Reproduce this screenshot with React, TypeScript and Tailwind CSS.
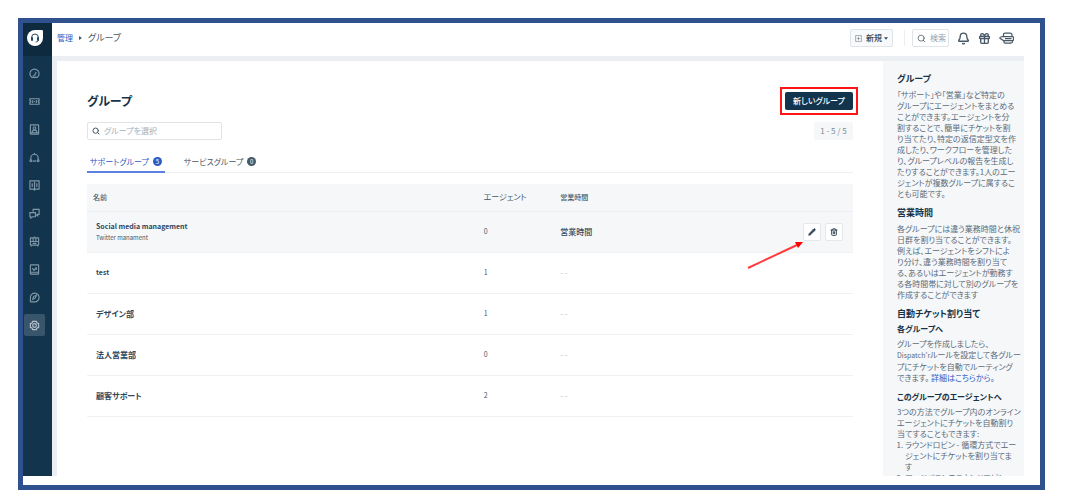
import { ReactNode } from "react";
import { Bell, Gift, Pencil, Search, Trash2 } from "lucide-react";

const navItems: { label: string; icon: ReactNode }[] = [
  {
    label: "ダッシュボード",
    icon: (
      <>
        <path d="M6 20.5a10 10 0 1 1 12 0z" />
        <path d="M12 15l4-6M8 17h6" />
      </>
    ),
  },
  {
    label: "チケット",
    icon: (
      <>
        <path d="M2 6h20v4a2 2 0 0 0 0 4v4H2v-4a2 2 0 0 0 0-4z" />
        <path d="M8 9v6M16 9v6M11 12h2" />
      </>
    ),
  },
  {
    label: "連絡先",
    icon: (
      <>
        <rect x="3" y="2" width="18" height="20" rx="1" />
        <circle cx="12" cy="9" r="3" />
        <path d="M7 18c0-6 10-6 10 0M3 19h18" />
      </>
    ),
  },
  {
    label: "ソーシャル",
    icon: (
      <>
        <path d="M4 17v-4a8 8 0 0 1 16 0v4M8 20h8" />
        <path d="M12 2v3" />
        <circle cx="4" cy="19" r="2" />
        <circle cx="20" cy="19" r="2" />
      </>
    ),
  },
  {
    label: "ソリューション",
    icon: (
      <>
        <path d="M2 2h20v18h-8l-2 2-2-2H2z" />
        <path d="M12 3v17M7 7v8M17 7v8" />
      </>
    ),
  },
  {
    label: "フォーラム",
    icon: (
      <>
        <path d="M9 8V3h13v11h-3v3l-4-3" />
        <path d="M2 10h12v9H8l-4 3v-3H2z" />
      </>
    ),
  },
  {
    label: "ボット",
    icon: (
      <>
        <rect x="3" y="4" width="18" height="16" rx="1" />
        <path d="M3 12h18M9 5v6M15 5v6M8 16h8M12 1v3M5 20v3M19 20v3" />
      </>
    ),
  },
  {
    label: "レポート",
    icon: (
      <>
        <rect x="3" y="2" width="18" height="20" rx="1" />
        <path d="M7 9l4 5 5-7M3 18h18M16 7v6" />
      </>
    ),
  },
  {
    label: "はじめに",
    icon: (
      <>
        <path d="M3 22v-10a9.500 9.500 0 1 1 9 9.500H3" />
        <path d="M8 16l2-6 6-3-2 6z" />
      </>
    ),
  },
  {
    label: "管理",
    icon: (
      <>
        <path d="M8 3h8l1 3 4 2v8l-4 2-1 3H8l-1-3-4-2V8l4-2z" />
        <circle cx="12" cy="12" r="4" />
      </>
    ),
  },
];

const groups = [
  { name: "test", agents: 1 },
  { name: "デザイン部", agents: 1 },
  { name: "法人営業部", agents: 0 },
  { name: "顧客サポート", agents: 2 },
];

function Lines({ items }: { items: string[] }) {
  return (
    <>
      {items.map((line) => (
        <span key={line} className="block whitespace-nowrap">
          {line}
        </span>
      ))}
    </>
  );
}

function Sidebar() {
  return (
    <nav className="w-[29px] shrink-0 bg-[#12344d]">
      <div className="flex h-[33px] items-center bg-[#0d2a3e] pb-[3px] pl-1">
        <svg viewBox="0 0 24 24" className="size-4">
          <path d="M12 0h10a2 2 0 0 1 2 2v10A12 12 0 1 1 12 0z" fill="#fff" />
          <path d="M7 14v-3a5 5 0 0 1 10 0v3M17 15c0 2-2 3-4 3" fill="none" stroke="#264966" strokeWidth="1.500" />
          <path d="M6 11h3v5H6zM15 11h3v5h-3z" fill="#264966" />
        </svg>
      </div>
      <ul className="mt-1.5 ml-px flex flex-col gap-1.5">
        {navItems.map((item) => (
          <li key={item.label}>
            <a
              href="#"
              aria-label={item.label}
              className={
                item.label === "管理"
                  ? "flex h-[22px] w-[21px] items-center justify-center rounded-xs bg-[#38556b] text-[#b4c2cd]"
                  : "flex h-[22px] w-[21px] items-center justify-center text-[#7f97a8]"
              }
            >
              <svg viewBox="0 0 24 24" fill="none" stroke="currentColor" strokeWidth="2.500" className="size-[11px]">
                {item.icon}
              </svg>
            </a>
          </li>
        ))}
      </ul>
    </nav>
  );
}

function TopBar() {
  return (
    <header className="flex h-[33px] shrink-0 items-center bg-white pr-2.5 pb-[3px] pl-[5px] text-[#475867]">
      <a href="#" className="text-[8px] text-[#2c5cc5]">管理</a>
      <svg viewBox="0 0 6 8" className="mx-1.5 h-1 w-[3px]">
        <path d="M0 0l6 4-6 4z" fill="#475867" />
      </svg>
      <span className="text-[9px]">グループ</span>

      <button className="ml-auto flex h-[18px] w-[43px] items-center justify-center gap-1 rounded-xs border border-[#dfe4e9] bg-[#f7f9fa] text-[8px] font-medium text-[#33475b]">
        <svg viewBox="0 0 12 12" fill="none" stroke="#6f7c87" className="size-[7px]">
          <path d="M1 1h10v10H1zM6 3v6M3 6h6" />
        </svg>
        <span className="flex items-center gap-0.5">
          新規
          <svg viewBox="0 0 8 5" className="h-[3px] w-1">
            <path d="M0 0h8L4 5z" fill="#33475b" />
          </svg>
        </span>
      </button>
      <div className="ml-[11px] h-4 w-px bg-[#ebeff3]" />
      <label className="ml-[7px] flex h-[18px] w-[37px] items-center gap-1 rounded-xs border border-[#dfe4e9] pl-1">
        <Search size={9} className="shrink-0 text-[#475867]" />
        <input aria-label="検索" placeholder="検索" className="w-full min-w-0 text-[8px] outline-none placeholder:text-[#92a2b1]" />
      </label>
      <button aria-label="通知" className="ml-2">
        <Bell size={13} strokeWidth={2.5} />
      </button>
      <button aria-label="新着情報" className="ml-2">
        <Gift size={13} strokeWidth={2.5} />
      </button>
      <button aria-label="Freddy" className="ml-2">
        <svg viewBox="0 0 30 24" fill="none" stroke="currentColor" strokeWidth="2.500" className="h-3 w-[15px]">
          <path d="M9 9V5q0-3 3-3h10q4 0 4 4v3M1 11l6-2h20q2 0 2 3v3q0 2-2 2H9L1 12M10 17v3q0 2 2 2h12q3 0 3-3v-2M12 13h13" />
        </svg>
      </button>
    </header>
  );
}

function GroupTable() {
  return (
    <table className="mt-[11px] w-full table-fixed text-left text-[8px] text-[#475867]">
      <thead>
        <tr className="h-[27px] border-b border-[#ebeff3] bg-[#f5f7f9]">
          <th className="w-[51%] px-1.5 text-[7px] font-medium">名前</th>
          <th className="w-[10%] px-1.5 font-normal">エージェント</th>
          <th className="w-[14%] px-1.5 text-[7px] font-medium">営業時間</th>
          <th aria-label="操作" />
        </tr>
      </thead>
      <tbody>
        <tr className="h-[41px] border-b border-[#f0f3f5] bg-[#f5f7f9]">
          <td className="px-[9px] leading-[11px]">
            <p className="text-[7px] font-bold text-[#33475b]">Social media management</p>
            <p className="text-[6px]">Twitter manament</p>
          </td>
          <td className="px-1.5 text-[7px]">0</td>
          <td className="px-1.5 font-medium text-[#33475b]">営業時間</td>
          <td className="pr-2.5">
            <div className="relative flex justify-end gap-1">
              <button aria-label="編集" className="flex size-[18px] items-center justify-center rounded-xs border border-[#e3e8ec] bg-white text-[#33475b]">
                <Pencil size={8} fill="currentColor" />
              </button>
              <button aria-label="削除" className="flex size-[18px] items-center justify-center rounded-xs border border-[#e3e8ec] bg-white text-[#33475b]">
                <Trash2 size={8} strokeWidth={3} />
              </button>
              <svg viewBox="0 0 56 28" className="absolute top-[18px] right-10 h-7 w-14">
                <path d="M1 27L50 4" stroke="#ff3b3b" strokeWidth="2" />
                <path d="M56 1L48 1l3 6z" fill="#ff0000" />
              </svg>
            </div>
          </td>
        </tr>
        {groups.map((group) => (
          <tr key={group.name} className="h-[41px] border-b border-[#f0f3f5]">
            <td className={group.name === "test" ? "px-[9px] text-[7px] font-bold text-[#33475b]" : "px-[9px] font-bold text-[#33475b]"}>
              {group.name}
            </td>
            <td className="px-1.5 text-[7px]">{group.agents}</td>
            <td className="px-1.5 text-[#b4c0ca]">- -</td>
            <td />
          </tr>
        ))}
      </tbody>
    </table>
  );
}

function HelpPanel() {
  const heading = "mb-[5px] text-[9px] leading-[10px] font-bold text-[#183247]";
  const subheading = "mb-1 leading-[10px] font-bold text-[#183247]";
  return (
    <aside className="w-[141px] shrink-0 overflow-hidden bg-[#f5f7f9] pt-[13px] pl-3.5 text-[8px] leading-[11px] text-[#5b6b79]">
      <h2 className={heading}>グループ</h2>
      <p className="mb-[9px]">
        <Lines
          items={[
            "「サポート」や「営業」など特定の",
            "グループにエージェントをまとめる",
            "ことができます。エージェントを分",
            "割することで、簡単にチケットを割",
            "り当てたり、特定の返信定型文を作",
            "成したり、ワークフローを管理した",
            "り、グループレベルの報告を生成し",
            "たりすることができます。1人のエー",
            "ジェントが複数グループに属するこ",
            "とも可能です。",
          ]}
        />
      </p>
      <h2 className={heading}>営業時間</h2>
      <p className="mb-[9px]">
        <Lines
          items={[
            "各グループには違う業務時間と休祝",
            "日群を割り当てることができます。",
            "例えば、エージェントをシフトによ",
            "り分け、違う業務時間を割り当て",
            "る、あるいはエージェントが勤務す",
            "る各時間帯に対して別のグループを",
            "作成することができます",
          ]}
        />
      </p>
      <h2 className={heading}>自動チケット割り当て</h2>
      <h3 className={subheading}>各グループへ</h3>
      <p className="mb-[9px]">
        <Lines items={["グループを作成しましたら、"]} />
        <span className="block whitespace-nowrap">
          <span className="text-[7px]">Dispatch'r</span>ルールを設定して各グルー
        </span>
        <Lines items={["プにチケットを自動でルーティング"]} />
        できます。 <a href="#" className="text-[#2c5cc5]">詳細はこちらから。</a>
      </p>
      <h3 className={subheading}>このグループのエージェントへ</h3>
      <p>
        <Lines items={["3つの方法でグループ内のオンライン", "エージェントにチケットを自動割り", "当てすることもできます:"]} />
      </p>
      <ol className="list-decimal pl-2">
        <li>
          <Lines items={["ラウンドロビン - 循環方式でエー", "ジェントにチケットを割り当てま", "す"]} />
        </li>
        <li>
          <Lines items={["ロードバランスラウンドロビン"]} />
        </li>
      </ol>
    </aside>
  );
}

export default function App() {
  return (
    <div
      lang="ja"
      className="h-screen bg-white pt-[18px] pr-[45px] pb-[11px] pl-[18px] font-['Noto_Sans_CJK_JP',sans-serif] [font-feature-settings:'palt']"
    >
      <div className="flex h-full border-5 border-[#2f528f] pr-4 pb-[9px]">
        <Sidebar />
        <div className="flex min-w-0 flex-1 flex-col">
          <TopBar />
          <div className="flex min-h-0 flex-1 border-t-5 border-l-5 border-[#ebeff3]">
            <main className="min-w-0 flex-1 overflow-hidden px-[30px] pt-[26px]">
              <div className="flex h-7 items-center justify-between">
                <h1 className="text-[12px] font-bold text-[#183247]">グループ</h1>
                <div className="relative">
                  <button className="block h-[18px] w-[68px] rounded-xs bg-[#12344d] text-[8px] font-medium text-white">新しいグループ</button>
                  <div className="pointer-events-none absolute -inset-[5px] border-2 border-[#ff1515]" />
                </div>
              </div>

              <div className="mt-[7px] flex h-[18px] justify-between">
                <label className="flex w-[135px] items-center gap-1 rounded-xs border border-[#dfe4e9] pl-1">
                  <Search size={8} strokeWidth={3} className="shrink-0 text-[#475867]" />
                  <input aria-label="グループを選択" placeholder="グループを選択" className="w-full min-w-0 text-[8px] outline-none placeholder:text-[#a3b0bb]" />
                </label>
                <span className="flex w-[39px] items-center justify-center rounded-xs bg-[#f5f7f9] text-[8px] text-[#7c8994]">1 - 5 / 5</span>
              </div>

              <div className="mt-3 flex h-[21px] gap-4 border-b border-[#ebeff3] text-[8px]">
                <button className="-mb-px flex items-center gap-1 border-b-2 border-[#5c7fe0] px-[3px] text-[#2c5cc5]">
                  サポートグループ
                  <span className="flex size-[9px] items-center justify-center rounded-full bg-[#2c5cc5] text-[6px] text-white">5</span>
                </button>
                <button className="-mb-px flex items-center gap-1 border-b-2 border-transparent px-[3px] text-[#475867]">
                  サービスグループ
                  <span className="flex size-[9px] items-center justify-center rounded-full bg-[#475867] text-[6px] text-white">0</span>
                </button>
              </div>

              <GroupTable />
            </main>
            <HelpPanel />
          </div>
        </div>
      </div>
    </div>
  );
}
